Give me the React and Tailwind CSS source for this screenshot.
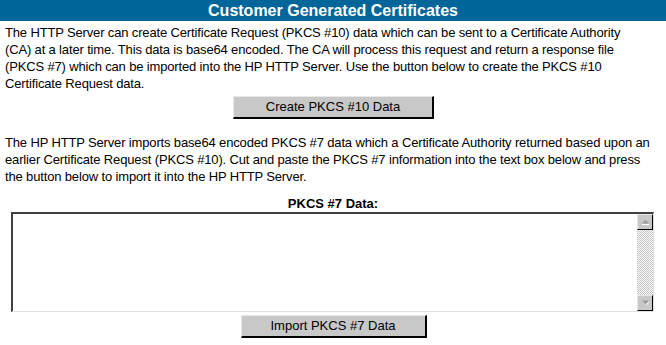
import React from "react";

const font = { fontFamily: '"Liberation Sans", Arial, sans-serif' };

function Btn({ children, w }) {
  return (
    <div
      className={`${w} h-[23px] bg-[#c8c8c8] border-t border-l border-t-[#e8e8e8] border-l-[#e8e8e8] border-r-2 border-b-2 border-r-black border-b-black flex items-center justify-center text-[13px] text-black`}
    >
      {children}
    </div>
  );
}

const p1 = [
  "The HTTP Server can create Certificate Request (PKCS #10) data which can be sent to a Certificate Authority",
  "(CA) at a later time. This data is base64 encoded. The CA will process this request and return a response file",
  "(PKCS #7) which can be imported into the HP HTTP Server. Use the button below to create the PKCS #10",
  "Certificate Request data.",
];
const p2 = [
  "The HP HTTP Server imports base64 encoded PKCS #7 data which a Certificate Authority returned based upon an",
  "earlier Certificate Request (PKCS #10). Cut and paste the PKCS #7 information into the text box below and press",
  "the button below to import it into the HP HTTP Server.",
];

export default function App() {
  return (
    <div className="w-[666px] h-[345px] bg-white overflow-hidden" style={font}>
      <div className="h-[21px] bg-[#006699] text-white font-bold text-[16px] leading-[21px] text-center">
        Customer Generated Certificates
      </div>
      <div className="pl-[5px] pt-[3px] text-[13px] leading-[17px] text-black">
        {p1.map((l) => (
          <div key={l} className="whitespace-nowrap tracking-[-0.15px]">{l}</div>
        ))}
      </div>
      <div className="flex justify-center mt-[4px] pl-[1px]">
        <Btn w="w-[201px]">Create PKCS #10 Data</Btn>
      </div>
      <div className="pl-[5px] mt-[15px] text-[13px] leading-[17px] text-black">
        {p2.map((l) => (
          <div key={l} className="whitespace-nowrap tracking-[-0.15px]">{l}</div>
        ))}
      </div>
      <div className="text-center font-bold text-[13px] leading-[17px] mt-[10px]">PKCS #7 Data:</div>
      <div className="ml-[11px] mr-[12px] h-[100px] flex border-t-2 border-l-2 border-t-[#404040] border-l-[#404040] border-r border-b border-r-[#e0e0e0] border-b-[#e0e0e0]">
        <div className="flex-1 bg-white" />
        <div className="w-[16px] flex flex-col">
          <div className="h-[16px] bg-[#c8c8c8] border-t border-l border-t-[#e8e8e8] border-l-[#e8e8e8] border-r border-b border-r-black border-b-black flex items-center justify-center">
            <svg width="9" height="6" viewBox="0 0 9 6"><path d="M1 5 L8 5 L8 6 L1 6Z" fill="#ffffff" /><path d="M4.5 1 L8 4.5 L1 4.5 Z" fill="#9a9a9a" /></svg>
          </div>
          <div className="flex-1 bg-[repeating-conic-gradient(#c0c0c0_0_25%,#ffffff_0_50%)] bg-[length:2px_2px]" />
          <div className="h-[16px] bg-[#c8c8c8] border-t border-l border-t-[#e8e8e8] border-l-[#e8e8e8] border-r border-b border-r-black border-b-black flex items-center justify-center">
            <svg width="9" height="6" viewBox="0 0 9 6"><path d="M1 0.5 L8 0.5 L4.5 4 Z" fill="#9a9a9a" /><path d="M5 4.5 L8 1.5 L8 2.5 L5 5.5Z" fill="#ffffff" /></svg>
          </div>
        </div>
      </div>
      <div className="flex justify-center mt-[3px] pl-[1px]">
        <Btn w="w-[186px]">Import PKCS #7 Data</Btn>
      </div>
    </div>
  );
}
